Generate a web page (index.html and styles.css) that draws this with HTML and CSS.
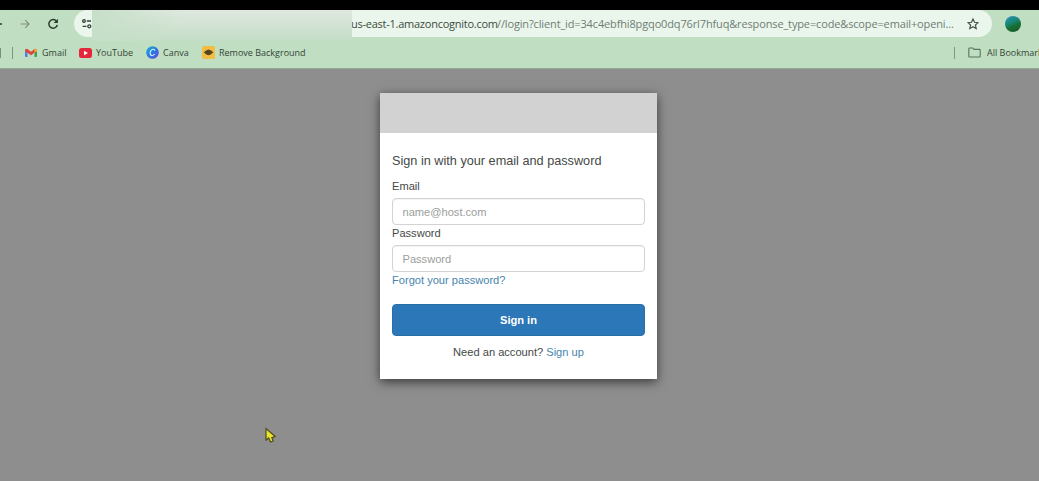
FILE: index.html
```html
<!DOCTYPE html>
<html lang="en">
<head>
<meta charset="utf-8">
<title>Sign in</title>
<link rel="stylesheet" href="styles.css">
</head>
<body>
<header class="browser">
  <div class="toolbar">
    <nav class="nav">
      <span class="back"></span>
      <svg class="forward" width="12" height="12" viewBox="0 0 12 12"><path d="M1.500 6H10M6.200 2.200L10 6L6.200 9.800"/></svg>
      <svg class="reload" width="12" height="12" viewBox="0 0 12 12"><path d="M9.800 3.600A4.300 4.300 0 1 0 10.300 7"/><path class="tip" d="M10.900 .8V5H6.700Z"/></svg>
    </nav>
    <div class="address">
      <svg class="tune" width="12" height="12" viewBox="0 0 12 12"><circle cx="3" cy="3" r="1.300"/><path d="M5.800 3H10M1.600 8.300H5.400"/><circle cx="8.300" cy="8.300" r="1.500"/></svg>
      <div class="url"><span class="host">us-east-1.amazoncognito.com</span><span class="path">//login?client_id=34c4ebfhi8pgqo0dq76rl7hfuq&amp;response_type=code&amp;scope=email+openi...</span></div>
      <svg class="star" width="12" height="12" viewBox="0 0 12 12"><path d="M6 1L7.500 4.300L11 4.700L8.400 7L9.200 10.600L6 8.700L2.800 10.600L3.600 7L1 4.700L4.500 4.300Z"/></svg>
      <div class="mask"></div>
    </div>
    <span class="avatar"></span>
  </div>
  <div class="bookmarks">
    <span class="apps"></span>
    <span class="divider"></span>
    <a class="bookmark gmail"><svg width="12" height="10" viewBox="0 0 12 10"><path fill="#4d83dc" d="M0 2H2.500V9H1Q0 9 0 8Z"/><path fill="#35a35b" d="M9.500 2H12V8Q12 9 11 9H9.500Z"/><path fill="#df463d" d="M0 2Q1-.2 2.800 1.300L6 3.800L9.200 1.300Q11-.2 12 2V3L6 7.300L0 3Z"/><path fill="#f1b52c" d="M9.500 1.200Q11.500 0 12 2V3L9.500 4.800Z"/></svg><span>Gmail</span></a>
    <a class="bookmark youtube"><svg width="13" height="10" viewBox="0 0 13 10"><rect width="13" height="10" rx="2.500" fill="#e5273c"/><path d="M5 2.800L9 5L5 7.200Z" fill="#fff"/></svg><span>YouTube</span></a>
    <a class="bookmark canva"><svg width="13" height="13" viewBox="0 0 13 13"><defs><linearGradient id="canva" x1="0" y1="0" x2="1" y2="1"><stop stop-color="#20b4cf"/><stop offset=".5" stop-color="#2878df"/><stop offset="1" stop-color="#7146dc"/></linearGradient></defs><circle cx="6.500" cy="6.500" r="6.300" fill="url(#canva)"/><path d="M8.800 4.700Q8.600 3 7 3.200C4.900 3.500 3.700 6.200 4.200 8C4.700 10 7.200 9.900 8.700 8" fill="none" stroke="#d6f2ff" stroke-width="1.100"/></svg><span>Canva</span></a>
    <a class="bookmark remove"><svg width="13" height="13" viewBox="0 0 13 13"><rect width="13" height="13" rx="1.500" fill="#f3bd43"/><path d="M1.800 6.300L4.500 4.200L6.500 3.600L8.700 4.200L11.300 6.300L8.700 8.600L6.500 9.200L4.300 8.600Z" fill="#54451f"/></svg><span>Remove Background</span></a>
    <div class="all">
      <span class="divider"></span>
      <svg width="13" height="11" viewBox="0 0 13 11"><path d="M.8 9.200V1.800Q.8 1 1.600 1H4.700L6 2.400H11.300Q12.200 2.400 12.200 3.200V9.200Q12.200 10 11.300 10H1.600Q.8 10 .8 9.200Z"/></svg>
      <span class="all-label">All Bookmarks</span>
    </div>
  </div>
</header>
<main class="page">
  <section class="card">
    <div class="banner"></div>
    <form class="form">
      <h1 class="title">Sign in with your email and password</h1>
      <label class="label" for="email">Email</label>
      <input class="field" id="email" type="email" placeholder="name@host.com">
      <label class="label" for="password">Password</label>
      <input class="field" id="password" type="password" placeholder="Password">
      <a class="link forgot">Forgot your password?</a>
      <button class="submit" type="button">Sign in</button>
      <p class="signup">Need an account? <a class="link">Sign up</a></p>
    </form>
  </section>
</main>
<svg class="cursor" width="12" height="17" viewBox="0 0 12 17"><path d="M1 1.500V13L3.700 11L5.600 15L8.200 14L6.800 10.600L10.200 9.500Z"/></svg>
</body>
</html>
```
FILE: styles.css
```css
* { box-sizing: border-box; }
body {
  margin: 0;
  width: 1039px;
  height: 481px;
  overflow: hidden;
  background: #8e8e8e;
  font-family: "Liberation Sans", Arial, sans-serif;
  position: relative;
}
.browser {
  height: 69px;
  border-top: 10px solid #000;
  border-bottom: 1px solid #92aa94;
  background: #c0dec1;
  font-family: "Open Sans", "Noto Sans", sans-serif;
}
.toolbar {
  display: flex;
  height: 27px;
  align-items: center;
}
.nav {
  display: flex;
  align-items: center;
  width: 74px;
  flex: none;
}
.back { width: 2px; height: 2px; background: #52664f; margin-right: 17px; }
.forward { fill: none; stroke: #81927f; stroke-width: 1.2; margin-right: 16px; }
.reload { fill: none; stroke: #293a2c; stroke-width: 1.5; }
.reload .tip { fill: #293a2c; stroke: none; }
.address {
  position: relative;
  display: flex;
  align-items: center;
  width: 918px;
  height: 27px;
  padding-left: 7px;
  border-radius: 14px;
  background: #eaf6ec;
}
.tune { fill: none; stroke: #344237; stroke-width: 1.3; margin-right: 258px; }
.url {
  display: flex;
  width: 602px;
  white-space: nowrap;
  font-size: 11px;
  line-height: 16px;
}
.host { width: 146px; color: #3c4a40; letter-spacing: -0.25px; }
.path { color: #707c74; letter-spacing: -0.14px; }
.star { fill: none; stroke: #46544a; stroke-width: 1.2; margin-left: 14px; }
.mask {
  position: absolute;
  left: 18px;
  top: 0;
  width: 260px;
  height: 31px;
  background: linear-gradient(90deg, #c6dfc8 0, #c6dfc800 90px), linear-gradient(#dfe8df, #c4ddc7);
}
.avatar {
  width: 16px;
  height: 16px;
  margin-left: 13px;
  border-radius: 50%;
  background: linear-gradient(155deg, #2590a4 15%, #16836d 45%, #176f35 60%, #1b5428);
}
.bookmarks {
  display: flex;
  align-items: center;
  height: 31px;
  font-size: 9px;
  line-height: 13px;
  color: #344538;
  white-space: nowrap;
}
.apps { width: 1px; height: 10px; background: #78917b; margin-right: 11px; }
.divider { width: 1px; height: 12px; background: #789b7b; flex: none; }
.bookmark { display: flex; align-items: center; }
.bookmark svg { flex: none; }
.gmail { margin-left: 12px; gap: 5px; width: 54px; }
.youtube { gap: 4px; width: 67px; }
.canva { gap: 4px; width: 56px; }
.remove { gap: 4px; }
.all {
  display: flex;
  align-items: center;
  margin-left: auto;
  width: 85px;
  overflow: hidden;
}
.all svg { flex: none; margin: 0 6px 0 13px; fill: none; stroke: #5c725e; stroke-width: 1.1; }
.page { padding: 24px 0 0 380px; }
.card {
  width: 277px;
  height: 286px;
  background: #fff;
  box-shadow: 0 3px 10px rgba(0, 0, 0, .6);
}
.banner { height: 40px; background: #d2d2d2; }
.form { padding: 19px 12px 0; display: flex; flex-direction: column; color: #444946; }
.title { margin: 0 0 8px; font-size: 12.7px; font-weight: 400; line-height: 18px; white-space: nowrap; }
.label { font-size: 11.1px; line-height: 14px; height: 20px; padding-top: 1px; }
.field {
  width: 253px;
  height: 27px;
  margin: 0;
  padding: 0 9.500px;
  border: 1px solid #d3d3d3;
  border-radius: 4px;
  background: #fff;
  font: 11.1px "Liberation Sans", Arial, sans-serif;
  box-shadow: inset 0 1px 1px rgba(0, 0, 0, .05);
}
.field::placeholder { color: #9a9e9b; opacity: 1; }
.link { color: #4684ae; }
.forgot { font-size: 11.1px; line-height: 14px; height: 32px; padding-top: 1px; }
.submit {
  width: 253px;
  height: 32px;
  padding: 0;
  border: 1px solid #2a6ea8;
  border-radius: 4px;
  background: #2b77b7;
  color: #fff;
  font: bold 11.1px "Liberation Sans", Arial, sans-serif;
}
.signup { margin: 9px 0 0; text-align: center; font-size: 11.1px; line-height: 14px; }
.cursor { position: absolute; left: 265px; top: 427px; fill: #e9e52f; stroke: #4c4b1d; stroke-width: 1.2; }
```
